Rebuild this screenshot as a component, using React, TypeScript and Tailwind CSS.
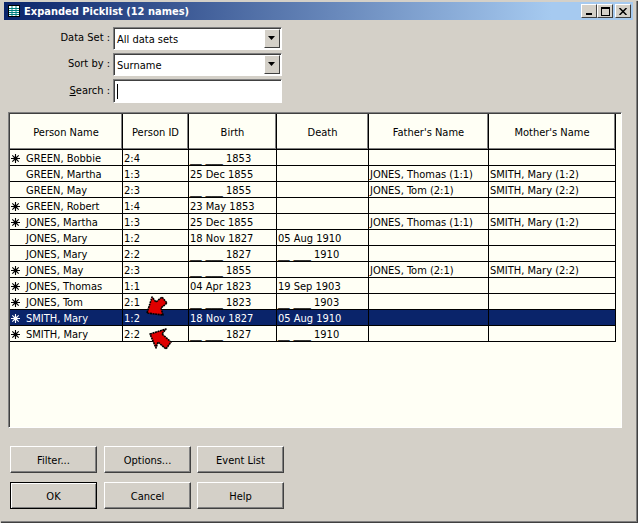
import { ReactNode } from "react";

const FONT = "font-['DejaVu_Sans_Condensed','Noto_Sans',sans-serif]";

const COLS = ["w-[113px]", "w-[66px]", "w-[88px]", "w-[92px]", "w-[120px]", "w-[127px]"];

type Row = { star?: boolean; name: string; id: string; birth: string; death: string; father: string; mother: string; selected?: boolean };

const ROWS: Row[] = [
  { star: true, name: "GREEN, Bobbie", id: "2:4", birth: "__ ___ 1853", death: "", father: "", mother: "" },
  { name: "GREEN, Martha", id: "1:3", birth: "25 Dec 1855", death: "", father: "JONES, Thomas (1:1)", mother: "SMITH, Mary (1:2)" },
  { name: "GREEN, May", id: "2:3", birth: "__ ___ 1855", death: "", father: "JONES, Tom (2:1)", mother: "SMITH, Mary (2:2)" },
  { star: true, name: "GREEN, Robert", id: "1:4", birth: "23 May 1853", death: "", father: "", mother: "" },
  { star: true, name: "JONES, Martha", id: "1:3", birth: "25 Dec 1855", death: "", father: "JONES, Thomas (1:1)", mother: "SMITH, Mary (1:2)" },
  { name: "JONES, Mary", id: "1:2", birth: "18 Nov 1827", death: "05 Aug 1910", father: "", mother: "" },
  { name: "JONES, Mary", id: "2:2", birth: "__ ___ 1827", death: "__ ___ 1910", father: "", mother: "" },
  { star: true, name: "JONES, May", id: "2:3", birth: "__ ___ 1855", death: "", father: "JONES, Tom (2:1)", mother: "SMITH, Mary (2:2)" },
  { star: true, name: "JONES, Thomas", id: "1:1", birth: "04 Apr 1823", death: "19 Sep 1903", father: "", mother: "" },
  { star: true, name: "JONES, Tom", id: "2:1", birth: "__ ___ 1823", death: "__ ___ 1903", father: "", mother: "" },
  { star: true, name: "SMITH, Mary", id: "1:2", birth: "18 Nov 1827", death: "05 Aug 1910", father: "", mother: "", selected: true },
  { star: true, name: "SMITH, Mary", id: "2:2", birth: "__ ___ 1827", death: "__ ___ 1910", father: "", mother: "" },
];

function Star({ light }: { light?: boolean }) {
  const c = light ? "#ffffff" : "#000000";
  return (
    <svg width="11" height="11" viewBox="0 0 11 11" className="-ml-[1px] shrink-0">
      <path d="M5.5 1v9M1 5.5h9M2.3 2.3l6.4 6.4M8.7 2.3l-6.4 6.4" stroke={c} strokeWidth="1.1" fill="none" />
      <circle cx="5.5" cy="5.5" r="2" fill={c} />
    </svg>
  );
}

function Arrow({ className, points }: { className: string; points: string }) {
  return (
    <svg width="24" height="24" viewBox="0 0 24 24" className={className}>
      <polygon points={points} fill="#e00000" stroke="#000" strokeWidth="1.6" strokeDasharray="2 0.6" strokeLinejoin="round" />
    </svg>
  );
}

function DateText({ value }: { value: string }) {
  // blank day and month are typed as underscores, which run wider in the reference
  if (!value.startsWith("__")) return <>{value}</>;
  return (
    <span className="whitespace-pre">
      <span className="mr-[5px] inline-block origin-left scale-x-[1.18] whitespace-pre">__ ___ </span>
      {value.slice(7)}
    </span>
  );
}

function Button({ children, isDefault, className = "" }: { children: ReactNode; isDefault?: boolean; className?: string }) {
  return (
    <button
      type="button"
      className={`flex h-[27px] w-[87px] items-center justify-center border pt-[1px] text-[#000] ${className} ${
        isDefault
          ? "border-black shadow-[inset_1px_1px_0_#ffffff,inset_-1px_-1px_0_#808080]"
          : "border-t-white border-l-white border-r-[#404040] border-b-[#404040] shadow-[inset_-1px_-1px_0_#808080]"
      }`}
    >
      {children}
    </button>
  );
}

function Field({ label, children, className }: { label: ReactNode; children: ReactNode; className: string }) {
  return (
    <div className={`flex items-center ${className}`}>
      <span className="w-[109px] pb-[2px] text-right text-[#000]">{label}</span>
      <div className="ml-[3px]">{children}</div>
    </div>
  );
}

function Combo({ value }: { value: string }) {
  return (
    <div className="flex h-[23px] w-[169px] items-center border border-t-[#808080] border-l-[#808080] border-r-white border-b-white bg-white pl-[3px] shadow-[inset_1px_1px_0_#404040]">
      <span className="flex-1 pt-[2px] text-black">{value}</span>
      <span className="mr-[1px] flex h-[19px] w-[16px] items-center justify-center border border-t-white border-l-white border-r-[#404040] border-b-[#404040] bg-[#d4d0c8]">
        <svg width="8" height="5" viewBox="0 0 8 5"><path d="M0 0h7L3.5 4z" fill="#000" /></svg>
      </span>
    </div>
  );
}

function Cell({ i, children, selected }: { i: number; children?: ReactNode; selected?: boolean }) {
  return (
    <div className={`${COLS[i]} flex h-full shrink-0 items-center overflow-hidden whitespace-nowrap border-r border-black pl-[1px] pt-[1px] ${selected ? "text-white" : "text-[#000]"}`}>
      {children}
    </div>
  );
}

export default function App() {
  const headers = ["Person Name", "Person ID", "Birth", "Death", "Father's Name", "Mother's Name"];
  return (
    <div className={`flex h-[523px] w-[638px] flex-col border-t border-l border-t-[#d4d0c8] border-l-[#d4d0c8] bg-[#d4d0c8] ${FONT} text-[11px] leading-[13px] shadow-[inset_-1px_-1px_0_#404040,inset_-2px_-2px_0_#808080]`}>
      <div className="mx-[3px] mt-[1px] flex h-[18px] w-[629px] items-center bg-[linear-gradient(90deg,#0a246a_0%,#a6caf0_87%)] pl-[4px] pr-[2px]">
        <svg width="12" height="12" viewBox="0 0 12 12" className="mr-[4px] shrink-0">
          <rect x="0.5" y="0.5" width="11" height="11" fill="#fff" stroke="#000" />
          <path d="M1 3.5h10M1 5.5h10M1 7.5h10M1 9.5h10M4 1v10M8 1v10" stroke="#008080" strokeWidth="1" />
        </svg>
        <span className="flex-1 font-bold text-white">Expanded Picklist (12 names)</span>
        <div className="flex">
          {["min", "max"].map((k) => (
            <span key={k} className="relative flex h-[14px] w-[16px] items-center justify-center border border-t-white border-l-white border-r-[#404040] border-b-[#404040] bg-[#d4d0c8]">
              {k === "min" ? (
                <span className="mt-[6px] h-[2px] w-[6px] bg-black" />
              ) : (
                <span className="h-[9px] w-[9px] border border-t-2 border-black" />
              )}
            </span>
          ))}
          <span className="ml-[2px] flex h-[14px] w-[16px] items-center justify-center border border-t-white border-l-white border-r-[#404040] border-b-[#404040] bg-[#d4d0c8]">
            <svg width="8" height="7" viewBox="0 0 8 7"><path d="M0.5 0l7 7M7.5 0l-7 7" stroke="#000" strokeWidth="1.5" /></svg>
          </span>
        </div>
      </div>

      <div className="flex flex-col pt-[7px]">
        <Field label="Data Set :" className="h-[23px]"><Combo value="All data sets" /></Field>
        <Field label="Sort by :" className="mt-[3px] h-[23px]"><Combo value="Surname" /></Field>
        <Field label={<><u>S</u>earch :</>} className="mt-[3px] h-[24px]">
          <div className="flex h-[24px] w-[169px] items-center border border-t-[#808080] border-l-[#808080] border-r-white border-b-white bg-white pl-[3px] shadow-[inset_1px_1px_0_#404040]">
            <span className="h-[15px] w-[1px] bg-black" />
          </div>
        </Field>
      </div>

      <div className="relative ml-[7px] mt-[9px] h-[316px] w-[614px] border border-t-[#808080] border-l-[#808080] border-r-white border-b-white bg-[#fffff5] shadow-[inset_1px_1px_0_#404040]">
        <div className="ml-[1px] mt-[1px] flex h-[36px] w-[606px] border-b border-black">
          {headers.map((h, i) => (
            <div key={h} className={`${COLS[i]} flex h-full shrink-0 items-center justify-center border-r border-black pt-[1px] text-[#000] shadow-[inset_-1px_-1px_0_#808080]`}>
              {h}
            </div>
          ))}
        </div>
        <div className="ml-[1px] w-[606px]">
          {ROWS.map((r, idx) => (
            <div key={idx} className={`flex h-[16px] items-center border-b border-black ${r.selected ? "bg-[#0a246a]" : ""}`}>
              <Cell i={0} selected={r.selected}>
                <span className="flex w-[15px] shrink-0 items-center">{r.star ? <Star light={r.selected} /> : null}</span>
                {r.name}
              </Cell>
              <Cell i={1} selected={r.selected}>{r.id}</Cell>
              <Cell i={2} selected={r.selected}><DateText value={r.birth} /></Cell>
              <Cell i={3} selected={r.selected}><DateText value={r.death} /></Cell>
              <Cell i={4} selected={r.selected}>{r.father}</Cell>
              <Cell i={5} selected={r.selected}>{r.mother}</Cell>
            </div>
          ))}
        </div>
        <Arrow className="absolute left-[137px] top-[183px]" points="1,17 6,1 10,6 16,1 21,7 15,12 17,19" />
        <Arrow className="absolute left-[140px] top-[215px]" points="1,6 17,1 13,6 22,14 17,21 9,14 7,20" />
      </div>

      <div className="ml-[9px] mt-[18px] flex">
        <Button>Filter...</Button>
        <Button className="ml-[7px]">Options...</Button>
        <Button className="ml-[6px]">Event List</Button>
      </div>
      <div className="ml-[9px] mt-[9px] flex">
        <Button isDefault>OK</Button>
        <Button className="ml-[7px]">Cancel</Button>
        <Button className="ml-[6px]">Help</Button>
      </div>
    </div>
  );
}
